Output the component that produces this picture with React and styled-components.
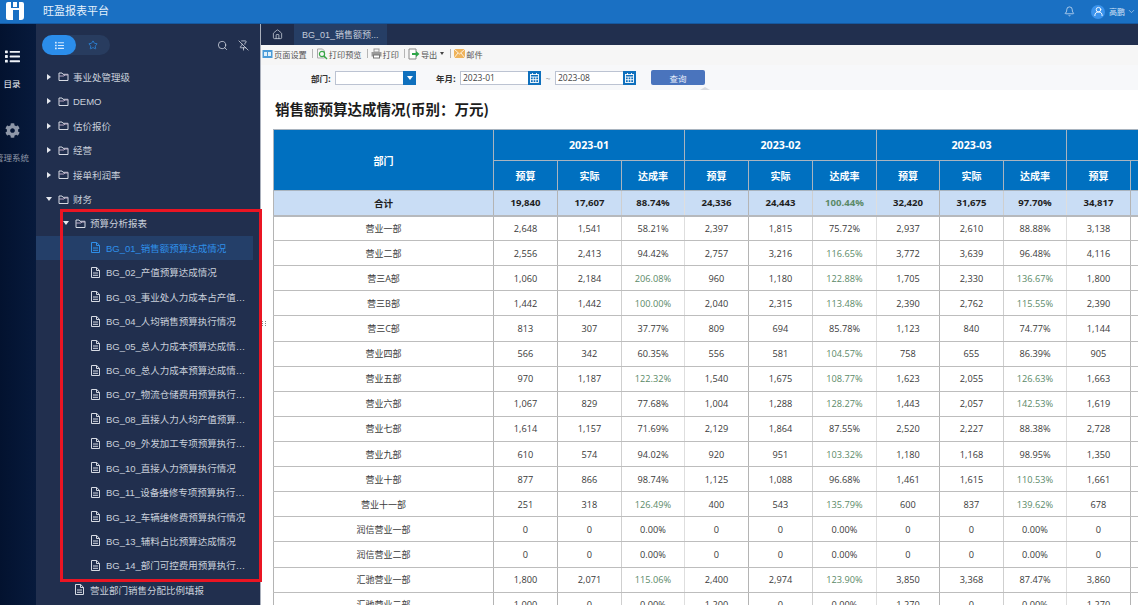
import React from 'react';
import styled, { createGlobalStyle } from 'styled-components';
import { Bell, Search, Star, Home, ChevronDown, UserRound, PinOff } from 'lucide-react';
import { FaList, FaCog } from 'react-icons/fa';

const Global = createGlobalStyle`
html, body { margin: 0; height: 605px; overflow: hidden; background: #fff; }
* { box-sizing: border-box; }
`;

const SANS = `"Liberation Sans", "Noto Sans CJK SC", sans-serif`;
const TABLE_FONT = `"Open Sans", "Noto Sans CJK SC", sans-serif`;
const CJK = `"Noto Sans CJK SC", sans-serif`;

const Shell = styled.div`
width: 1138px;
height: 605px;
display: flex;
flex-direction: column;
overflow: hidden;
font-family: ${SANS};
`;

const TopBar = styled.header`
height: 24px;
flex: none;
background: #1a70c3;
border-bottom: 1px solid #15589f;
display: flex;
align-items: center;
color: #fff;
padding-right: 2px;
`;

const Logo = styled.svg`
width: 20px;
height: 20px;
margin: 0 18px 2px 5px;
flex: none;
`;

const Brand = styled.div`
font-size: 11px;
font-family: ${CJK};
color: #e6f0fb;
flex: 1;
margin-bottom: 3px;
`;

const BellWrap = styled.div`
display: flex;
margin-right: 16px;
color: #dbe8f7;
`;

const Avatar = styled.div`
width: 14px;
height: 14px;
border-radius: 50%;
background: #3b93ec;
display: flex;
align-items: center;
justify-content: center;
margin-right: 4px;
`;

const UserName = styled.span`
font-size: 8px;
font-family: ${CJK};
color: #cfe2f6;
margin-right: 2px;
`;

const Body = styled.div`
flex: 1;
display: flex;
min-height: 0;
`;

const Rail = styled.nav`
width: 36px;
flex: none;
background: linear-gradient(90deg, #03122f, #071a3c);
overflow: hidden;
padding-top: 25px;
`;

const RailItem = styled.div`
width: 48px;
margin-left: -12px;
height: ${p => p.$height}px;
display: flex;
flex-direction: column;
align-items: center;
color: ${p => p.$color};
`;

const RailLabel = styled.span`
margin-top: ${p => p.$top}px;
font-size: 8.5px;
white-space: nowrap;
font-family: ${CJK};
`;

const Panel = styled.aside`
width: 225px;
flex: none;
background: #212f4e;
border-right: 1px solid #aab0bc;
position: relative;
padding-top: 11px;
`;

const PanelHead = styled.div`
height: 20px;
display: flex;
align-items: center;
padding: 0 11px 0 6px;
margin-bottom: 9.75px;
`;

const Segments = styled.div`
display: flex;
width: 68px;
height: 20px;
border-radius: 10px;
background: #283c5f;
flex: none;
`;

const Segment = styled.div`
width: 34px;
border-radius: 10px;
display: flex;
align-items: center;
justify-content: center;
background: ${p => (p.$active ? '#2b8dea' : 'transparent')};
color: ${p => (p.$active ? '#d8ebff' : '#2b8dea')};
`;

const HeadTools = styled.div`
margin-left: auto;
display: flex;
align-items: center;
gap: 10px;
color: #dfe4ec;
`;

const TreeRow = styled.div`
height: 24.43px;
width: 217px;
display: flex;
align-items: center;
padding-left: ${p => p.$pad}px;
font-size: 9.5px;
white-space: nowrap;
background: ${p => (p.$active ? '#243f69' : 'transparent')};
color: ${p => (p.$active ? '#2f8fe9' : '#c9cfdb')};
`;

const Caret = styled.span`
width: 12px;
flex: none;
display: flex;
`;

const CaretShape = styled.i`
display: block;
width: 0;
height: 0;
${p => p.$open
    ? 'border-left: 3px solid transparent; border-right: 3px solid transparent; border-top: 4px solid #e5e8ee;'
    : 'border-top: 3px solid transparent; border-bottom: 3px solid transparent; border-left: 4px solid #e5e8ee; margin-left: 1px;'}
`;

const IconSlot = styled.span`
width: 15px;
flex: none;
display: flex;
`;

const Highlight = styled.div`
position: absolute;
left: 24px;
top: 185px;
width: 202px;
height: 373px;
border: 3px solid #ea1523;
z-index: 2;
pointer-events: none;
`;

const Main = styled.main`
flex: 1;
min-width: 0;
display: flex;
flex-direction: column;
position: relative;
`;

const TabBar = styled.div`
height: 21px;
flex: none;
background: #212f4e;
display: flex;
`;

const HomeTab = styled.div`
width: 33px;
display: flex;
align-items: center;
justify-content: center;
color: #d5dae3;
background: #1f2c4a;
`;

const ReportTab = styled.div`
width: 93px;
background: #263e65;
color: #c4ccda;
font-size: 9px;
display: flex;
align-items: center;
padding-left: 8px;
white-space: nowrap;
`;

const Toolbar = styled.div`
height: 20px;
flex: none;
background: #f6f6f6;
display: flex;
align-items: center;
padding: 0 0 3px 1px;
font-size: 8.2px;
font-family: ${CJK};
color: #555;
`;

const ToolButton = styled.span`
display: flex;
align-items: center;
gap: 1px;
white-space: nowrap;
`;

const ToolSep = styled.i`
width: 1px;
height: 9px;
background: #b5b5b5;
margin: 0 3px 0 ${p => p.$left || 5}px;
`;

const MiniCaret = styled.i`
width: 0;
height: 0;
margin-left: 2px;
border-left: 2.5px solid transparent;
border-right: 2.5px solid transparent;
border-top: 3px solid #444;
`;

const FilterBar = styled.div`
height: 25px;
flex: none;
background: #f7f8fa;
display: flex;
align-items: center;
padding-left: 50px;
font-size: 8.5px;
font-family: ${CJK};
color: #333;
position: relative;
`;

const FieldLabel = styled.label`
font-weight: 700;
width: ${p => p.$width}px;
margin-left: ${p => p.$gap || 0}px;
flex: none;
`;

const Field = styled.div`
width: 81px;
height: 14px;
background: #fff;
border: 1px solid #bcc3d2;
display: flex;
align-items: center;
justify-content: space-between;
padding-left: 2px;
font-family: ${TABLE_FONT};
color: #444;
flex: none;
`;

const FieldButton = styled.span`
width: 13px;
height: 14px;
margin: -1px -1px -1px 0;
background: #0f70bd;
display: flex;
align-items: center;
justify-content: center;
`;

const DownTriangle = styled.i`
width: 0;
height: 0;
border-left: 3.5px solid transparent;
border-right: 3.5px solid transparent;
border-top: 4px solid #fff;
`;

const RangeDash = styled.span`
width: 14px;
text-align: center;
color: #888;
flex: none;
`;

const QueryButton = styled.button`
width: 54px;
height: 15px;
margin-left: 15px;
border: 0;
border-radius: 2px;
background: #4a74bd;
color: #e8eefa;
font-size: 8.5px;
font-family: ${CJK};
padding: 0;
`;

const CollapseTip = styled.i`
position: absolute;
left: 439px;
bottom: 0;
width: 0;
height: 0;
border-left: 5px solid transparent;
border-right: 5px solid transparent;
border-bottom: 3px solid #d9dbe0;
`;

const Splitter = styled.i`
position: absolute;
left: 1px;
top: 297px;
width: 4px;
height: 5px;
border-left: 1px dotted #888;
border-right: 1px dotted #888;
`;

const Report = styled.section`
flex: 1;
min-height: 0;
overflow: hidden;
padding-left: 12px;
background: #fff;
`;

const Title = styled.h1`
margin: 0;
height: 39px;
padding: 9px 0 0 2px;
font-size: 14.5px;
line-height: 20px;
font-weight: 700;
color: #1c1c1c;
font-family: ${CJK};
white-space: nowrap;
`;

const Table = styled.table`
border-collapse: collapse;
table-layout: fixed;
width: 921px;
font-family: ${TABLE_FONT};
`;

const HeadCell = styled.th`
background: #0070c0;
color: #fff;
font-size: ${p => (p.$year ? '10.7px' : '10px')};
font-weight: 700;
padding: 0;
height: ${p => p.$h || 30}px;
border: 1px solid #a9b4bf;
text-align: center;
`;

const BodyRow = styled.tr`
height: 25.12px;
`;

const TotalRow = styled.tr`
height: 25px;
background: #c9ddf5;
font-weight: 700;
color: #1e1e1e;
`;

const Cell = styled.td`
padding: 0;
text-align: center;
font-size: ${p => (p.$total ? '9.6px' : p.$name ? '9px' : '9.2px')};
border-top: 1px solid #bdbdbd;
border-bottom: ${p => (p.$total ? '2px solid #b6b9bd' : '1px solid #bdbdbd')};
border-left: 1px solid #b4b4b4;
border-right: 1px solid ${p => p.$line};
color: ${p => (p.$good ? '#5b8a68' : p.$total ? '#1e1e1e' : '#3a3a3a')};
white-space: nowrap;
`;

const FolderIcon = () => (
  <svg width="11" height="11" viewBox="0 0 11 11" fill="none" stroke="#d6dae3" strokeWidth="1">
    <path d="M1 2h3l1 1.3h5v6.2H1z" />
    <path d="M1 5h5l1-1h3" stroke="#b9a9c4" />
  </svg>
);

const FileIcon = ({ color }) => (
  <svg width="9" height="11" viewBox="0 0 9 11" fill="none" stroke={color} strokeWidth="1">
    <path d="M.5.5h5.2l2.8 2.8v7.2h-8z" />
    <path d="M5.5.5v3h3M2 6h5M2 8.3h5" />
  </svg>
);

const LogoMark = () => (
  <Logo viewBox="0 0 20 20">
    <path fill="#fff" d="M1 3q0-2 2-2h14q2 0 2 2v13q0 3-3 3h-2V9H8v10H3q-2 0-2-2z" />
    <path fill="#1a70c3" d="M6 1h2v5h4V1h2v6H6z" />
  </Logo>
);

const PageSetupIcon = () => (
  <svg width="11" height="10" viewBox="0 0 11 10">
    <rect x=".5" y="1" width="10" height="8" fill="#4a9bd8" />
    <rect x="2" y="3" width="3" height="4" fill="#dff0fb" />
    <rect x="6" y="3" width="3" height="4" fill="#dff0fb" />
  </svg>
);

const PreviewIcon = () => (
  <svg width="12" height="12" viewBox="0 0 12 12" fill="none">
    <path d="M1.5 1h5l2 2v7h-7z" stroke="#a9a9a9" />
    <circle cx="6" cy="6" r="2.6" stroke="#39a845" strokeWidth="1.2" />
    <path d="M8 8l3 3" stroke="#39a845" strokeWidth="1.4" />
  </svg>
);

const PrintIcon = () => (
  <svg width="11" height="11" viewBox="0 0 11 11" fill="none">
    <rect x="3" y="1" width="5" height="3" stroke="#999" />
    <rect x=".5" y="4" width="10" height="4.5" fill="#9a9a9a" />
    <rect x="2.5" y="7" width="6" height="3" fill="#fff" stroke="#777" />
  </svg>
);

const ExportIcon = () => (
  <svg width="12" height="12" viewBox="0 0 12 12" fill="none">
    <path d="M1 1h7v10H1z" stroke="#888" fill="#fff" />
    <path d="M4 5h4V3l3.5 3L8 9V7H4z" fill="#2fa64a" />
  </svg>
);

const MailIcon = () => (
  <svg width="11" height="9" viewBox="0 0 11 9">
    <rect width="11" height="9" fill="#efb45c" />
    <path d="M0 0l5.5 5L11 0M0 9l4-5M11 9L7 4" stroke="#fff" strokeWidth=".8" fill="none" />
  </svg>
);

const CalendarIcon = () => (
  <svg width="9" height="10" viewBox="0 0 9 10" fill="none" stroke="#fff" strokeWidth=".9">
    <rect x=".5" y="1.5" width="8" height="8" />
    <path d="M.5 4h8M3.2 4v5.5M5.8 4v5.5M.5 6.7h8M2.5 0v2M6.5 0v2" />
  </svg>
);

const tree = [
  { label: '事业处管理级', pad: 10, caret: 'closed' },
  { label: 'DEMO', pad: 10, caret: 'closed' },
  { label: '估价报价', pad: 10, caret: 'closed' },
  { label: '经营', pad: 10, caret: 'closed' },
  { label: '接单利润率', pad: 10, caret: 'closed' },
  { label: '财务', pad: 10, caret: 'open' },
  { label: '预算分析报表', pad: 27, caret: 'open' },
  { label: 'BG_01_销售额预算达成情况', pad: 55, active: true },
  { label: 'BG_02_产值预算达成情况', pad: 55 },
  { label: 'BG_03_事业处人力成本占产值…', pad: 55 },
  { label: 'BG_04_人均销售预算执行情况', pad: 55 },
  { label: 'BG_05_总人力成本预算达成情…', pad: 55 },
  { label: 'BG_06_总人力成本预算达成情…', pad: 55 },
  { label: 'BG_07_物流仓储费用预算执行…', pad: 55 },
  { label: 'BG_08_直接人力人均产值预算…', pad: 55 },
  { label: 'BG_09_外发加工专项预算执行…', pad: 55 },
  { label: 'BG_10_直接人力预算执行情况', pad: 55 },
  { label: 'BG_11_设备维修专项预算执行…', pad: 55 },
  { label: 'BG_12_车辆维修费预算执行情况', pad: 55 },
  { label: 'BG_13_辅料占比预算达成情况', pad: 55 },
  { label: 'BG_14_部门可控费用预算执行…', pad: 55 },
  { label: '营业部门销售分配比例填报', pad: 39 },
];

const months = ['2023-01', '2023-02', '2023-03'];

const total = ['19,840', '17,607', '88.74%', '24,336', '24,443', '100.44%', '32,420', '31,675', '97.70%', '34,817'];

const rows = [
  ['营业一部', '2,648', '1,541', '58.21%', '2,397', '1,815', '75.72%', '2,937', '2,610', '88.88%', '3,138'],
  ['营业二部', '2,556', '2,413', '94.42%', '2,757', '3,216', '116.65%', '3,772', '3,639', '96.48%', '4,116'],
  ['营三A部', '1,060', '2,184', '206.08%', '960', '1,180', '122.88%', '1,705', '2,330', '136.67%', '1,800'],
  ['营三B部', '1,442', '1,442', '100.00%', '2,040', '2,315', '113.48%', '2,390', '2,762', '115.55%', '2,390'],
  ['营三C部', '813', '307', '37.77%', '809', '694', '85.78%', '1,123', '840', '74.77%', '1,144'],
  ['营业四部', '566', '342', '60.35%', '556', '581', '104.57%', '758', '655', '86.39%', '905'],
  ['营业五部', '970', '1,187', '122.32%', '1,540', '1,675', '108.77%', '1,623', '2,055', '126.63%', '1,663'],
  ['营业六部', '1,067', '829', '77.68%', '1,004', '1,288', '128.27%', '1,443', '2,057', '142.53%', '1,619'],
  ['营业七部', '1,614', '1,157', '71.69%', '2,129', '1,864', '87.55%', '2,520', '2,227', '88.38%', '2,728'],
  ['营业九部', '610', '574', '94.02%', '920', '951', '103.32%', '1,180', '1,168', '98.95%', '1,350'],
  ['营业十部', '877', '866', '98.74%', '1,125', '1,088', '96.68%', '1,461', '1,615', '110.53%', '1,661'],
  ['营业十一部', '251', '318', '126.49%', '400', '543', '135.79%', '600', '837', '139.62%', '678'],
  ['润信营业一部', '0', '0', '0.00%', '0', '0', '0.00%', '0', '0', '0.00%', '0'],
  ['润信营业二部', '0', '0', '0.00%', '0', '0', '0.00%', '0', '0', '0.00%', '0'],
  ['汇驰营业一部', '1,800', '2,071', '115.06%', '2,400', '2,974', '123.90%', '3,850', '3,368', '87.47%', '3,860'],
  ['汇驰营业二部', '1,000', '0', '0.00%', '1,200', '0', '0.00%', '1,270', '0', '0.00%', '1,270'],
];

// column widths follow the report: two at 64, one at 63
const colWidths = [220, 64, 64, 63, 64, 64, 64, 63, 64, 63, 64, 64];

// right border of a data cell, index 0 is the first budget column
const lineFor = i => ['#b4b4b4', '#cfcfcf', '#dedede'][i % 3];
const isGood = v => v.endsWith('%') && parseFloat(v) >= 100;

function TreeNode({ node }) {
  const isFolder = Boolean(node.caret);
  return (
    <TreeRow $pad={node.pad} $active={node.active}>
      {isFolder && <Caret><CaretShape $open={node.caret === 'open'} /></Caret>}
      <IconSlot>{isFolder ? <FolderIcon /> : <FileIcon color={node.active ? '#2f8fe9' : '#d6dae3'} />}</IconSlot>
      <span>{node.label}</span>
    </TreeRow>
  );
}

function ReportTable() {
  return (
    <Table>
      <colgroup>
        {colWidths.map((w, i) => <col key={i} style={{ width: w }} />)}
      </colgroup>
      <thead>
        <tr>
          <HeadCell rowSpan={2} $h={31}>部门</HeadCell>
          {months.map(m => <HeadCell key={m} colSpan={3} $year $h={31}>{m}</HeadCell>)}
          <HeadCell colSpan={2} $h={31} />
        </tr>
        <tr>
          {months.map(m => (
            <React.Fragment key={m}>
              <HeadCell>预算</HeadCell>
              <HeadCell>实际</HeadCell>
              <HeadCell>达成率</HeadCell>
            </React.Fragment>
          ))}
          <HeadCell>预算</HeadCell>
          <HeadCell />
        </tr>
      </thead>
      <tbody>
        <TotalRow>
          <Cell $total $name $line="#b4b4b4">合计</Cell>
          {total.map((v, i) => <Cell key={i} $total $good={isGood(v)} $line={lineFor(i)}>{v}</Cell>)}
          <Cell $total $line="#cfcfcf" />
        </TotalRow>
        {rows.map(([name, ...values]) => (
          <BodyRow key={name}>
            <Cell $name $line="#b4b4b4">{name}</Cell>
            {values.map((v, i) => <Cell key={i} $good={isGood(v)} $line={lineFor(i)}>{v}</Cell>)}
            <Cell $line="#cfcfcf" />
          </BodyRow>
        ))}
      </tbody>
    </Table>
  );
}

export default function App() {
  return (
    <Shell>
      <Global />
      <TopBar>
        <LogoMark />
        <Brand>旺盈报表平台</Brand>
        <BellWrap><Bell size={11} strokeWidth={1.6} /></BellWrap>
        <Avatar><UserRound size={11} color="#fff" strokeWidth={2} /></Avatar>
        <UserName>高鹏</UserName>
        <ChevronDown size={9} color="#a9c8ea" />
      </TopBar>
      <Body>
        <Rail>
          <RailItem $height={74} $color="#eef2f8">
            <FaList size={15} />
            <RailLabel $top={13}>目录</RailLabel>
          </RailItem>
          <RailItem $height={60} $color="#8e97a8">
            <FaCog size={15} />
            <RailLabel $top={13}>管理系统</RailLabel>
          </RailItem>
        </Rail>
        <Panel>
          <PanelHead>
            <Segments>
              <Segment $active><FaList size={9} /></Segment>
              <Segment><Star size={10} strokeWidth={1.8} /></Segment>
            </Segments>
            <HeadTools>
              <Search size={11} strokeWidth={1.6} />
              <PinOff size={11} strokeWidth={1.6} />
            </HeadTools>
          </PanelHead>
          {tree.map(node => <TreeNode key={node.label} node={node} />)}
          <Highlight />
        </Panel>
        <Main>
          <TabBar>
            <HomeTab><Home size={11} strokeWidth={1.6} /></HomeTab>
            <ReportTab>BG_01_销售额预...</ReportTab>
          </TabBar>
          <Toolbar>
            <ToolButton><PageSetupIcon />页面设置</ToolButton>
            <ToolSep />
            <ToolButton><PreviewIcon />打印预览</ToolButton>
            <ToolSep />
            <ToolButton><PrintIcon />打印</ToolButton>
            <ToolSep />
            <ToolButton><ExportIcon />导出<MiniCaret /></ToolButton>
            <ToolSep $left={6} />
            <ToolButton><MailIcon />邮件</ToolButton>
          </Toolbar>
          <FilterBar>
            <FieldLabel $width={24}>部门:</FieldLabel>
            <Field>
              <span />
              <FieldButton><DownTriangle /></FieldButton>
            </Field>
            <FieldLabel $width={24} $gap={20}>年月:</FieldLabel>
            <Field>
              2023-01
              <FieldButton><CalendarIcon /></FieldButton>
            </Field>
            <RangeDash>~</RangeDash>
            <Field>
              2023-08
              <FieldButton><CalendarIcon /></FieldButton>
            </Field>
            <QueryButton>查询</QueryButton>
            <CollapseTip />
          </FilterBar>
          <Report>
            <Title>销售额预算达成情况(币别：万元)</Title>
            <ReportTable />
          </Report>
          <Splitter />
        </Main>
      </Body>
    </Shell>
  );
}
